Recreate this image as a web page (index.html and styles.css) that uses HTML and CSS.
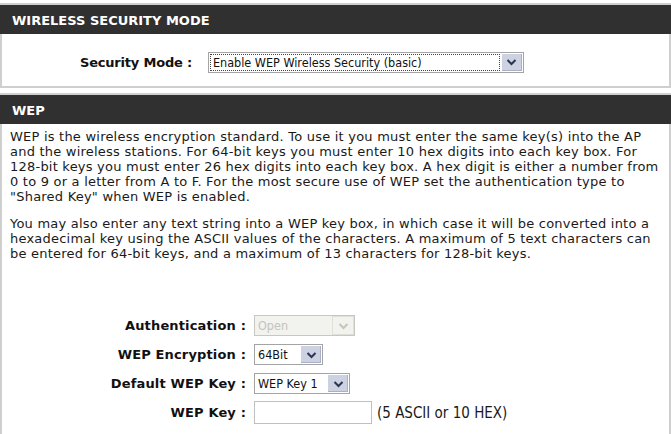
FILE: index.html
```html
<!DOCTYPE html>
<html>
<head>
  <link rel="stylesheet" href="styles.css">
</head>
<body>
  <div class="box">
    <h2>WIRELESS SECURITY MODE</h2>
    <div class="mode-row">
      <label for="securityMode">Security Mode :</label>
      <span class="select wide focused">
        <select id="securityMode">
          <option>Enable WEP Wireless Security (basic)</option>
          <option>Disable Wireless Security (not recommended)</option>
          <option>Enable WPA Wireless Security (enhanced)</option>
        </select>
        <span class="arrow"><svg width="11" height="8" viewBox="0 0 11 8"><path d="M1.5 2 L5.5 6 L9.5 2" fill="none" stroke="#2d3650" stroke-width="2"/></svg></span>
      </span>
    </div>
  </div>

  <div class="box">
    <h2>WEP</h2>
    <div class="content">
      <p>WEP is the wireless encryption standard. To use it you must enter the same key(s) into the AP<br>
        and the wireless stations. For 64-bit keys you must enter 10 hex digits into each key box. For<br>
        128-bit keys you must enter 26 hex digits into each key box. A hex digit is either a number from<br>
        0 to 9 or a letter from A to F. For the most secure use of WEP set the authentication type to<br>
        "Shared Key" when WEP is enabled.</p>
      <p>You may also enter any text string into a WEP key box, in which case it will be converted into a<br>
        hexadecimal key using the ASCII values of the characters. A maximum of 5 text characters can<br>
        be entered for 64-bit keys, and a maximum of 13 characters for 128-bit keys.</p>

      <div class="form">
        <label for="auth">Authentication :</label>
        <span class="select auth disabled">
          <select id="auth" disabled>
            <option>Open</option>
            <option>Shared Key</option>
          </select>
          <span class="arrow"><svg width="11" height="8" viewBox="0 0 11 8"><path d="M1.5 2 L5.5 6 L9.5 2" fill="none" stroke="#c4c8b8" stroke-width="2"/></svg></span>
        </span>

        <label for="encryption">WEP Encryption :</label>
        <span class="select enc">
          <select id="encryption">
            <option>64Bit</option>
            <option>128Bit</option>
          </select>
          <span class="arrow"><svg width="11" height="8" viewBox="0 0 11 8"><path d="M1.5 2 L5.5 6 L9.5 2" fill="none" stroke="#2d3650" stroke-width="2"/></svg></span>
        </span>

        <label for="defaultKey">Default WEP Key :</label>
        <span class="select key">
          <select id="defaultKey">
            <option>WEP Key 1</option>
            <option>WEP Key 2</option>
            <option>WEP Key 3</option>
            <option>WEP Key 4</option>
          </select>
          <span class="arrow"><svg width="11" height="8" viewBox="0 0 11 8"><path d="M1.5 2 L5.5 6 L9.5 2" fill="none" stroke="#2d3650" stroke-width="2"/></svg></span>
        </span>

        <label for="wepKey">WEP Key :</label>
        <span class="field">
          <input type="text" id="wepKey">
          <span class="hint">(5 ASCII or 10 HEX)</span>
        </span>
      </div>
    </div>
  </div>
</body>
</html>
```

FILE: styles.css
```css
body {
  margin: 0;
  padding-top: 3px;
  font-family: 'DejaVu Sans', sans-serif;
  font-size: 13px;
  letter-spacing: 0.22px;
  color: #1a1a1a;
  background: #fff;
}

.box {
  border: 2px solid #cfcfcf;
  margin-bottom: 5px;
}

.box h2 {
  margin: 0 -2px;
  height: 29px;
  line-height: 32px;
  padding-left: 12px;
  background-color: #303030;
  color: #fff;
  font-family: 'DejaVu Sans', sans-serif;
  font-size: 13px;
  font-weight: bold;
  letter-spacing: 0;
}

.mode-row {
  display: flex;
  align-items: center;
  height: 52px;
  padding-left: 78px;
  gap: 16px;
  padding-top: 4px;
  box-sizing: border-box;
}

label {
  font-family: 'DejaVu Sans', sans-serif;
  font-size: 13px;
  font-weight: bold;
  letter-spacing: 0.15px;
  color: #111;
}

.mode-row label {
  letter-spacing: -0.2px;
}

.content {
  padding: 5px 0 40px 8px;
  overflow: hidden;
}

.content p {
  margin: 0 0 12px 0;
  line-height: 15px;
  white-space: nowrap;
}

.form {
  display: grid;
  grid-template-columns: 236px auto;
  grid-auto-rows: 29px;
  column-gap: 8px;
  align-items: center;
  justify-items: start;
  padding-top: 38px;
}

.form label {
  justify-self: end;
}

/* select with a separate arrow box, XP style */
.select {
  display: inline-flex;
  align-items: stretch;
  height: 21px;
  border: 1px solid #a4a4a4;
  box-sizing: border-box;
  background: #fff;
}

.select select {
  appearance: none;
  -webkit-appearance: none;
  border: none;
  outline: none;
  background: transparent;
  font-family: 'DejaVu Sans Condensed', sans-serif;
  font-size: 12.5px;
  letter-spacing: 0;
  color: #111;
  padding: 0 3px;
  margin: 0;
  flex-grow: 1;
  min-width: 0;
}

.select.focused select {
  border: 1px dotted #444;
  margin: 1px;
  padding: 0 2px;
}

.select .arrow {
  width: 20px;
  flex-shrink: 0;
  display: flex;
  align-items: center;
  justify-content: center;
  background-color: #cdd2e3;
  border: 1px solid #fff;
  box-shadow: inset -1px -1px 0 #aab0c8;
}

.select.wide { width: 316px; }
.select.auth { width: 101px; }
.select.enc { width: 69px; }
.select.key { width: 96px; }

.select.disabled {
  background: #f2f2ee;
  border-color: #c8c8c0;
}

.select.disabled select {
  color: #b0b0a8;
}

.select.disabled .arrow {
  background-color: #f2f2ee;
  box-shadow: none;
  border-color: #e0e0d8;
}

.field {
  display: flex;
  align-items: center;
  gap: 5px;
}

.field input {
  width: 118px;
  height: 23px;
  box-sizing: border-box;
  border: 1px solid #c0c0c0;
  padding: 2px 4px;
  font-size: 12px;
}

.hint {
  font-family: 'DejaVu Sans Condensed', sans-serif;
  font-size: 15px;
  letter-spacing: 0;
}
```
